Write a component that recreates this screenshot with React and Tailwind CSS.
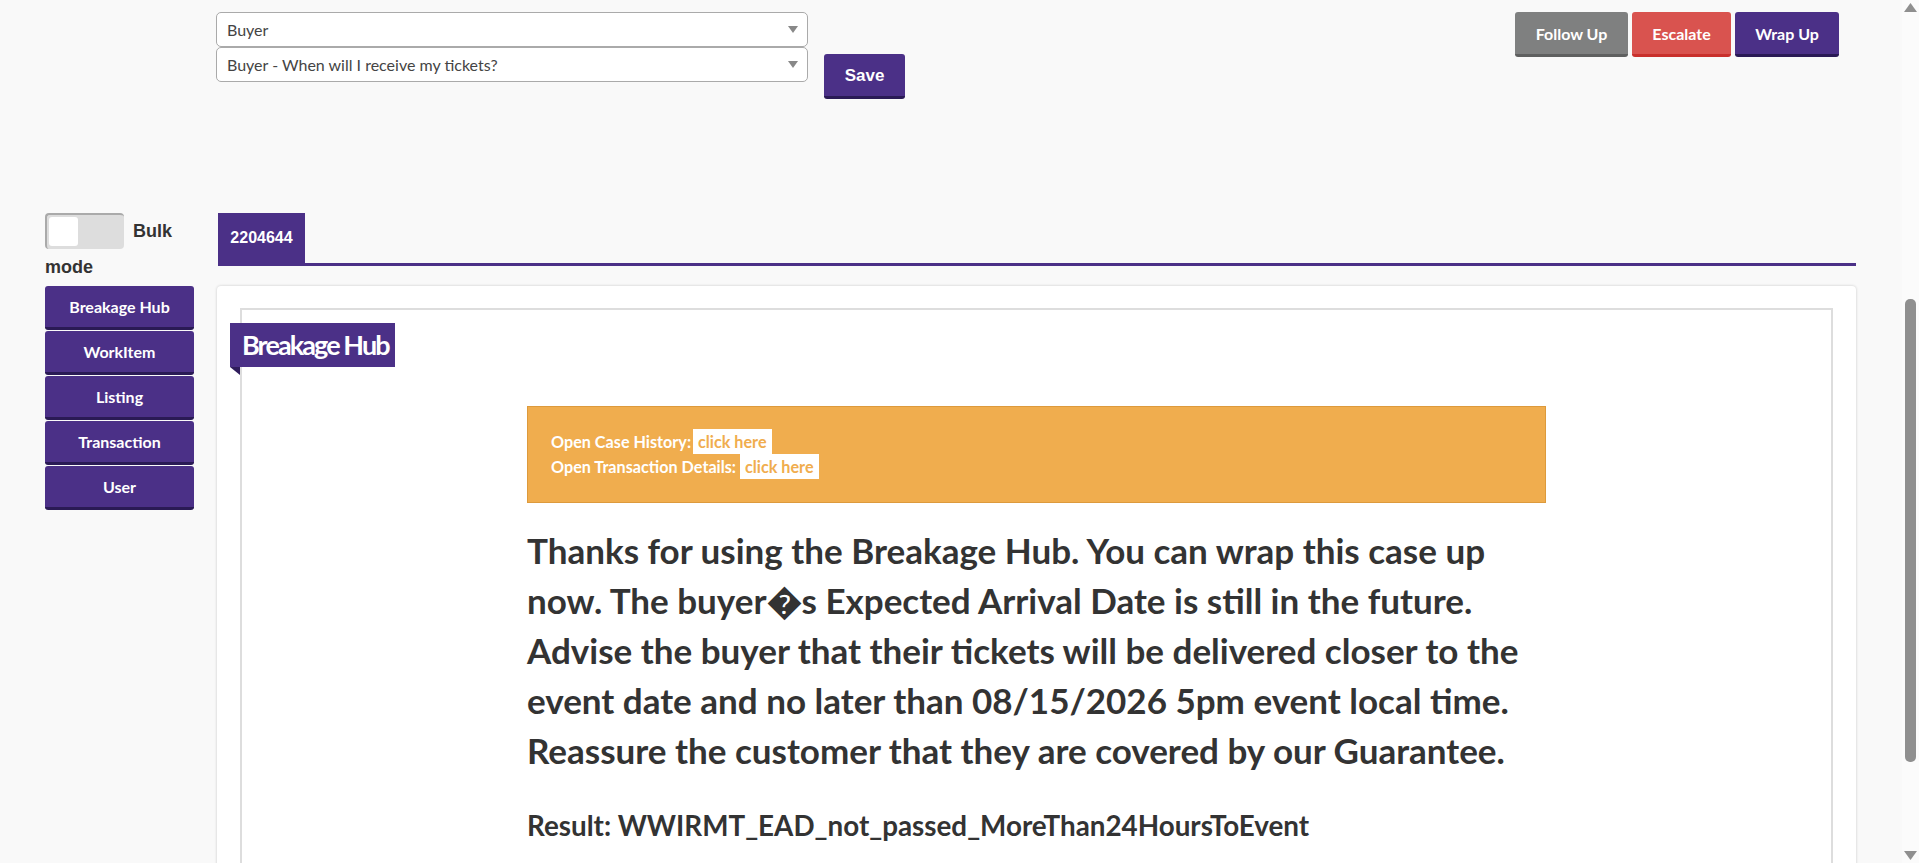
import React from 'react';

const sideItems = ['Breakage Hub', 'WorkItem', 'Listing', 'Transaction', 'User'];

function FakeSelect({ label }) {
  return (
    <div className="flex items-center justify-between h-[35px] pl-[10px] pr-[9px] bg-white border border-[#aaaaaa] rounded-[5px] text-[#444444] text-[16px]">
      <span>{label}</span>
      <svg width="10" height="7" viewBox="0 0 10 7"><path d="M0 0h10L5 7z" fill="#888888" /></svg>
    </div>
  );
}

function ActionButton({ label, className }) {
  return (
    <button className={`h-[45px] pt-[2px] rounded-[3px] border-b-[3px] text-white font-bold text-[16px] ${className}`}>
      {label}
    </button>
  );
}

export default function App() {
  return (
    <div className="flex w-full h-[863px] overflow-hidden bg-[#f9f9f9] font-['Lato',sans-serif]">
      <div className="flex-1 min-w-0">
        {/* Top bar */}
        <div className="flex h-[213px] pl-[216px] pr-[63px]">
          <div className="w-[592px] pt-[12px] flex flex-col">
            <FakeSelect label="Buyer" />
            <FakeSelect label="Buyer - When will I receive my tickets?" />
          </div>
          <button className="ml-[16px] mt-[54px] w-[81px] h-[45px] pt-[2px] rounded-[3px] border-b-[3px] border-[#2a1a55] bg-[#4b3087] text-white font-bold text-[17px] font-['Liberation_Sans',sans-serif]">
            Save
          </button>
          <div className="ml-auto pt-[12px] flex items-start gap-[4px]">
            <ActionButton label="Follow Up" className="w-[113px] bg-[#7f8080] border-[#5f6060]" />
            <ActionButton label="Escalate" className="w-[99px] bg-[#d9534f] border-[#c9302c]" />
            <ActionButton label="Wrap Up" className="w-[104px] bg-[#4b3087] border-[#2a1a55]" />
          </div>
        </div>

        <div className="flex pl-[45px] pr-[46px]">
          {/* Sidebar */}
          <div className="w-[149px] shrink-0 mr-[24px]">
            <div className="h-[73px] font-['Liberation_Sans',sans-serif] font-bold text-[18px] leading-[36px] text-[#333333]">
              <span className="inline-block align-top w-[79px] h-[36px] mr-[9px] bg-[#dddddd] rounded-[4px] border-t-2 border-l-2 border-[#aaaaaa] p-[2px]">
                <span className="block w-[29px] h-[29px] bg-white rounded-[3px]" />
              </span>
              Bulk mode
            </div>
            <div className="flex flex-col gap-[1px]">
              {sideItems.map(item => (
                <button key={item} className="h-[44px] pt-[1px] rounded-[3px] border-b-[3px] border-[#2a1a55] bg-[#4b3087] text-white font-bold text-[16px]">
                  {item}
                </button>
              ))}
            </div>
          </div>

          {/* Content */}
          <div className="flex-1 min-w-0">
            <div className="h-[53px] border-b-[3px] border-[#4b3087]">
              <div className="w-[87px] h-[50px] flex items-center justify-center bg-[#4b3087] text-white font-bold text-[16px] font-['Liberation_Sans',sans-serif]">
                2204644
              </div>
            </div>

            <div className="mt-[20px] -ml-px h-[700px] pt-[22px] pl-[23px] pr-[23px] bg-white rounded-[4px] shadow-[0_0_3px_rgba(0,0,0,0.2)]">
              <div className="relative h-[600px] border-2 border-[#dddddd] pt-[96px] pl-[285px]">
                <div className="absolute left-[-12px] top-[13px] w-[165px] h-[44px] flex items-center pl-[12px] bg-[#4b3087] text-white font-bold text-[27px] tracking-[-1.9px] whitespace-nowrap">
                  Breakage Hub
                  <svg className="absolute left-0 top-[44px]" width="10" height="8" viewBox="0 0 10 8"><path d="M0 0h10v8z" fill="#2f1c5c" /></svg>
                </div>

                <div className="w-[1019px] h-[97px] pt-[22px] pl-[23px] bg-[#f0ad4e] border border-[#dd9a3c] text-white font-bold text-[16.2px] leading-[25px]">
                  <div>Open Case History: <span className="inline-block -ml-[2px] px-[5px] bg-white text-[#f0ad4e]">click here</span></div>
                  <div>Open Transaction Details: <span className="inline-block px-[5px] bg-white text-[#f0ad4e]">click here</span></div>
                </div>

                <div className="w-[1019px] mt-[22px] text-[#333333] font-bold text-[35px] leading-[50px]">
                  Thanks for using the Breakage Hub. You can wrap this case up now. The buyer�s Expected Arrival Date is still in the future. Advise the buyer that their tickets will be delivered closer to the event date and no later than 08/15/2026 5pm event local time. Reassure the customer that they are covered by our Guarantee.
                </div>

                <div className="mt-[31px] text-[#333333] font-bold text-[27.8px] leading-[40px]">
                  Result: WWIRMT_EAD_not_passed_MoreThan24HoursToEvent
                </div>
              </div>
            </div>
          </div>
        </div>
      </div>

      {/* Scrollbar */}
      <div className="relative w-[17px] shrink-0 bg-[#fbfbfb]">
        <svg className="absolute left-[2px] top-[3px]" width="13" height="9" viewBox="0 0 13 9"><path d="M6.5 0L13 9H0z" fill="#8f8f8f" /></svg>
        <div className="absolute left-[3px] top-[299px] w-[11px] h-[463px] rounded-[5px] bg-[#8f8f8f]" />
        <svg className="absolute left-[2px] top-[851px]" width="13" height="9" viewBox="0 0 13 9"><path d="M0 0h13L6.5 9z" fill="#8f8f8f" /></svg>
      </div>
    </div>
  );
}
